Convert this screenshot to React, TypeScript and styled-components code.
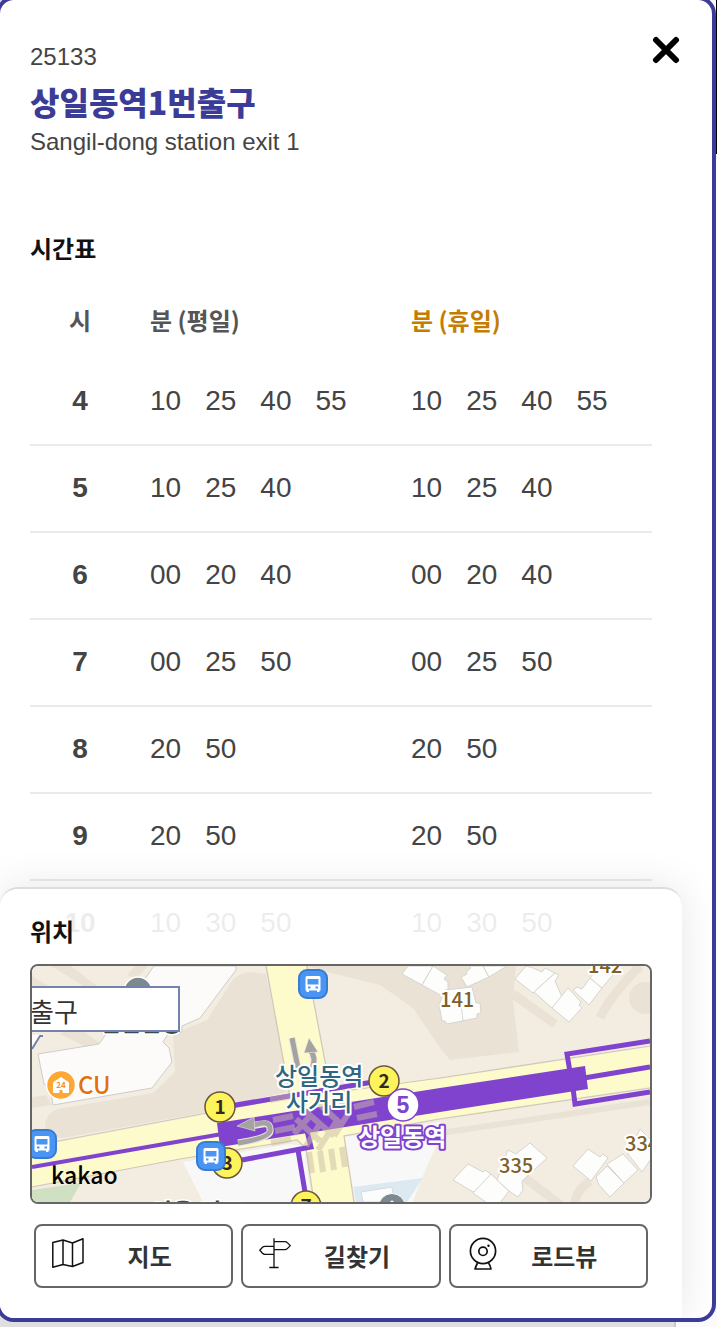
import React from 'react';
import styled, { createGlobalStyle } from 'styled-components';

const GlobalStyle = createGlobalStyle`
  * { box-sizing: border-box; }
  body {
    margin: 0;
    font-family: 'Liberation Sans', 'Noto Sans CJK KR', sans-serif;
    color: #444;
  }
`;

const Page = styled.div`
  min-height: 100vh;
  overflow: hidden;
  background:
    linear-gradient(#000, #000) top right / 1px 154px no-repeat,
    linear-gradient(90deg, #dfdfdf calc(100% - 43px), #c8c8c8 calc(100% - 43px), #c8c8c8 calc(100% - 41px), #fafafa calc(100% - 41px));
`;

const Panel = styled.main`
  margin: -4px 1px 5px -4px;
  border: 4px solid #3b3b98;
  border-radius: 18px;
  background: #fff;
  overflow: hidden;
`;

const Header = styled.header`
  display: flex;
  justify-content: space-between;
  align-items: flex-start;
  padding: 30px 26px 0 30px;
`;

const StopInfo = styled.div`
  padding-top: 13px;
  font-size: 24px;
  line-height: 28px;
`;

const StopName = styled.h1`
  margin: 6px 0 3px;
  font: 900 32px/48px 'Noto Sans CJK KR', sans-serif;
  color: #3b3b98;
`;

const Line = styled.p`
  margin: 0;
`;

const CloseButton = styled.button`
  display: grid;
  place-items: center;
  width: 40px;
  height: 40px;
  padding: 0;
  border: 0;
  background: none;
  cursor: pointer;
`;

const SectionTitle = styled.h2`
  margin: 0;
  font: 700 24px/36px 'Noto Sans CJK KR', sans-serif;
  color: #111;
`;

const Schedule = styled.section`
  padding: 74px 60px 0 30px;
`;

const Timetable = styled.table`
  width: 100%;
  margin-top: 18px;
  border-collapse: separate;
  border-spacing: 0;
  table-layout: fixed;
`;

const HeadCell = styled.th<{ $hour?: boolean; $holiday?: boolean }>`
  width: ${p => (p.$hour ? '100px' : 'auto')};
  height: 75px;
  padding: ${p => (p.$hour ? '0 0 3px' : '0 0 3px 20px')};
  text-align: ${p => (p.$hour ? 'center' : 'left')};
  font: 700 24px/36px 'Noto Sans CJK KR', sans-serif;
  color: ${p => (p.$holiday ? '#c47d00' : '#555')};
`;

const HourCell = styled.th`
  height: 87px;
  padding: 0 0 2px;
  border-bottom: 2px solid #ebebeb;
  font-size: 28px;
  line-height: 32px;
`;

const MinuteCell = styled.td`
  padding: 0 0 2px 20px;
  border-bottom: 2px solid #ebebeb;
  font-size: 28px;
  line-height: 32px;
`;

const Minutes = styled.div`
  display: flex;
  gap: 24px;
`;

const LocationSheet = styled.section`
  position: relative;
  margin: -81px 30px 0 0;
  padding: 24px 30px 26px;
  border-top: 2px solid #ddd;
  border-radius: 18px 18px 0 0;
  background: rgba(255, 255, 255, 0.9);
  box-shadow: 0 0 40px rgba(0, 0, 0, 0.1);
`;

const MapFrame = styled.div`
  position: relative;
  height: 240px;
  margin: 15px 0 16px;
  border: 2px solid #666;
  border-radius: 8px;
  overflow: hidden;
`;

const MapDrawing = styled.svg`
  display: block;
  width: 100%;
  height: 236px;
  font-family: 'Noto Sans CJK KR', sans-serif;
`;

const InfoWindow = styled.div`
  position: absolute;
  top: 20px;
  left: -8px;
  width: 156px;
  height: 46px;
  padding-left: 4px;
  border: 2px solid #7582ab;
  background: #fff;
  font: 400 26px/46px 'Noto Sans CJK KR', sans-serif;
  color: #333;
`;

const Actions = styled.div`
  display: flex;
`;

const ActionButton = styled.button`
  display: flex;
  flex: 1;
  align-items: center;
  height: 64px;
  margin: 4px;
  padding: 0 16px;
  border: 2px solid #666;
  border-radius: 8px;
  background: none;
  color: #333;
  font: 700 24px/36px 'Noto Sans CJK KR', sans-serif;
  cursor: pointer;

  svg {
    flex: none;
    margin-bottom: 6px;
    overflow: visible;
  }
`;

const ActionLabel = styled.span`
  flex: 1;
  text-align: center;
`;

type Row = { hour: string; weekday: string[]; holiday: string[] };

const same = (hour: string, minutes: string[]): Row => ({ hour, weekday: minutes, holiday: minutes });

const rows: Row[] = [
  same('4', ['10', '25', '40', '55']),
  same('5', ['10', '25', '40']),
  same('6', ['00', '20', '40']),
  same('7', ['00', '25', '50']),
  same('8', ['20', '50']),
  same('9', ['20', '50']),
  same('10', ['10', '30', '50']),
];

const MinuteList = ({ values }: { values: string[] }) => (
  <MinuteCell>
    <Minutes>
      {values.map(v => (
        <span key={v}>{v}</span>
      ))}
    </Minutes>
  </MinuteCell>
);

const BusStop = ({ x, y }: { x: number; y: number }) => (
  <g transform={`translate(${x} ${y})`}>
    <rect x="1" y="1" width="28" height="28" rx="8" fill="#4a95f3" stroke="#357dd2" strokeWidth="2" />
    <path
      fill="#fff"
      fillRule="evenodd"
      d="M9 7h12q1.500 0 1.500 1.500V21.500H21.500V23h-2.500v-1.500h-8V23H8.500v-1.500H7.500V8.500Q7.500 7 9 7zM9.500 10v5.500h11V10zM10 17.500v2h2.500v-2zM17.500 17.500v2H20v-2z"
    />
  </g>
);

const Exit = ({ x, y, label }: { x: number; y: number; label: string }) => (
  <g>
    <circle cx={x} cy={y} r="15" fill="#fdf35b" stroke="#6b5540" strokeWidth="1.500" />
    <text x={x} y={y + 7} textAnchor="middle" fontSize="19" fontWeight="700" fill="#33291e">
      {label}
    </text>
  </g>
);

const HouseNumber = ({ x, y, children }: { x: number; y: number; children: string }) => (
  <text x={x} y={y} fontSize="20" fontWeight="500" fill="#7e6028" stroke="#fff" strokeWidth="4" strokeLinejoin="round" paintOrder="stroke">
    {children}
  </text>
);

const buildings = [
  '376,0 370,8 390,19 401,0',
  '390,19 410,30 416,24 416,16 412,13 415,9 401,0',
  '437,0 439,2 434,6 435,8 429,11 435,21 457,11 451,0',
  '457,11 475,0 451,0',
  '413,24 440,21 444,37 448,37 449,47 445,48 445,52 415,58 413,55 410,55 407,39',
  '494,0 483,13 501,27 523,7 513,2 510,6 501,2',
  '523,7 527,9 523,15 530,31 520,42 502,26',
  '536,22 520,42 537,56 550,42 547,39 549,36',
  '541,24 545,21 550,23 558,12 570,22 557,39',
  '558,12 570,22 584,5 568,-1',
  '436,198 421,214 441,226 445,225 459,208 453,204 451,206',
  '459,208 477,225 468,237 455,237 441,227',
  '465,214 476,184 484,188 498,177 515,192 490,215 491,224 486,231 477,225',
  '556,183 541,200 559,215 576,192 571,188 568,191',
  '575,200 564,211 567,219 578,231 592,217',
  '575,198 591,188 606,204 592,217',
  '596,188 608,163 621,176 621,190 610,206',
];

const AreaMap = () => (
  <MapDrawing viewBox="0 0 618 236" preserveAspectRatio="xMinYMid slice" role="img" aria-label="상일동역 주변 지도">
    <rect width="618" height="236" fill="#f3ece1" />
    <g fill="#eae2d5">
      <path d="M141 69L158 61 175 54 198 18Q203 8 218 6L234 8 258 125 200 139 175 146 31 172Q12 170 13 158 15 147 25 143L121 127 143 106z" />
      <path d="M276 0L295 6 348 19 381 42 408 82 418 94 487 86 481 34 484 0z" />
      <path d="M19 0H39L75 28 55 22zM0 10L30 28H0zM103 0H116L104 13 95 9zM28 68L44 60 72 80 64 86zM0 131L14 129 20 139 0 142z" />
      <path d="M171 213l10-8 5 7-8 7z" />
      <circle cx="613" cy="32" r="16" />
    </g>
    <g fill="none" stroke="#eae2d5" strokeWidth="9">
      <path d="M481 28L523 58M568 52Q578 30 608 0M493 212L530 240M543 238Q543 225 558 215" />
      <path d="M408 167L618 136" strokeWidth="6" />
    </g>
    <path d="M0 224L49 217 38 236H0z" fill="#cfe0c3" />

    <path d="M151 196L258 178 272 180 280 236H171z" fill="#f8f8f9" />
    <path d="M313 171L408 156 413 160 390 212 381 236H323z" fill="#f8f8f9" />
    <path d="M321 221L391 212 375 236H324z" fill="#dce9f1" />
    <path d="M329 226L360 221 362 236H331z" fill="#fcfcfc" stroke="#d4dce0" />
    <path
      d="M122 0L67 78 6 88 12 118 18 121 21 139 120 122 140 96 137 82 131 76 136 68 150 66 150 60 168 52 204 4V0z"
      fill="#fcfbf9"
      stroke="#cdcdca"
    />
    <g fill="#fdfdfc" stroke="#d6d4d0">
      {buildings.map(p => (
        <polygon key={p} points={p} />
      ))}
      <path d="M429 37l2 18" />
    </g>

    <path
      d="M235 0H274L298 122 408 113 618 81V121L408 152 312 169 322 236H282L274 182 265 174 148 193 0 220V181L175 148 259 131z"
      fill="#fdfacb"
    />
    <g fill="none" stroke="#d0c8b5" strokeWidth="1.200">
      <path d="M234 0L258 131M275 0L298 122" />
      <path d="M0 180L175 147 259 131M298 127L408 112 618 80M0 221L148 193 265 174 274 182 282 236M322 236L312 170 408 153 618 122" />
    </g>

    <g fill="none" stroke="#8043ce" strokeWidth="5">
      <path d="M0 201L190 168" strokeWidth="4" />
      <path d="M552 112L618 101M198 140L341 116M210 194L279 181 275 165M266 184L273 226" />
      <path d="M618 75L535 88 538 106M541 122L543 138 618 126" />
    </g>
    <path d="M185 157L408 122 553 100 556 123 408 146 188 181z" fill="#8043ce" />

    <g fill="none" stroke="#c9bba5" strokeOpacity=".5" strokeWidth="6">
      <path d="M241 154l20-4M243 165l20-4M322 141l20-5M325 152l20-4M238 134l22-4M239 177l20-4" />
      <path d="M272 144l30 26M264 153l24 22M284 135l26 24M274 180l15-24M286 184l18-28M302 170l14-22M262 168l16-18" />
      <path d="M277 186l3 21M288 185l3 21M299 183l3 21M310 181l3 20" />
    </g>

    <g fill="none" stroke="#e9e6de" strokeWidth="7">
      <path d="M260 72L266 102M279 88Q284 92 280 104" />
      <path d="M218 160L230 158Q239 156 238 166 237 172 206 177" />
    </g>
    <g fill="none" stroke="#a5a3a2" strokeWidth="5">
      <path d="M260 72L266 102M278 84Q285 92 280 102" />
      <path d="M218 160L230 157Q239 156 238 165 237 172 206 177" />
    </g>
    <path d="M277 72L286 86 272 87zM205 160L222 151 223 165z" fill="#a5a3a2" stroke="#e9e6de" strokeWidth=".6" />

    <text x="68" y="65" fontSize="22" fontWeight="700" fill="#3c4a54" stroke="#fff" strokeWidth="3" paintOrder="stroke">선일빌딩</text>
    <circle cx="106" cy="25" r="14" fill="#7c8a90" stroke="#fff" strokeWidth="1.500" />
    <circle cx="360" cy="241" r="13.500" fill="#7c8a90" stroke="#fff" strokeWidth="1" />
    <path d="M358 236q2-3 4 0z" fill="#fff" />
    <path d="M10 69L0 84V69z" fill="#fff" />
    <path d="M11 70H8L0 83" fill="none" stroke="#7582ab" strokeWidth="2" />

    <circle cx="29" cy="119" r="14.500" fill="#fda835" stroke="#fff" strokeWidth="1.500" />
    <path d="M29 111.500L36.500 116.500V126.500H31V123.500H27V126.500H21.500V116.500z" fill="#fff" stroke="#fff" strokeLinejoin="round" />
    <text x="29" y="122" textAnchor="middle" fontSize="8" fontWeight="700" fill="#f09020">24</text>
    <text x="46" y="128" fontSize="24" fontWeight="500" fill="#e2700f" stroke="#fff" strokeWidth="3" paintOrder="stroke">CU</text>

    <HouseNumber x={408} y={41}>141</HouseNumber>
    <HouseNumber x={556} y={7}>142</HouseNumber>
    <HouseNumber x={467} y={207}>335</HouseNumber>
    <HouseNumber x={593} y={185}>334</HouseNumber>

    <g fontSize="24" fontWeight="500" fill="#2f6680" stroke="#fff" strokeWidth="4" strokeLinejoin="round" paintOrder="stroke">
      <text x="243" y="119">상일동역</text>
      <text x="254" y="145">사거리</text>
    </g>

    <Exit x={188} y={141} label="1" />
    <Exit x={352} y={115} label="2" />
    <Exit x={195} y={197} label="3" />
    <Exit x={274} y={240} label="7" />
    <circle cx="371" cy="139" r="16" fill="#fff" stroke="#8043ce" strokeWidth="1.500" />
    <text x="371" y="147" textAnchor="middle" fontSize="23" fontWeight="700" fill="#8043ce" fontFamily="Liberation Sans, sans-serif">5</text>
    <text x="326" y="180" fontSize="24" fontWeight="700" fill="#fff" stroke="#8043ce" strokeWidth="4" strokeLinejoin="round" paintOrder="stroke">
      상일동역
    </text>

    <BusStop x={266} y={3} />
    <BusStop x={-5} y={163} />
    <BusStop x={164} y={175} />

    <text x="118" y="255" fontSize="24" fontWeight="700" fill="#3c4a54" stroke="#fff" strokeWidth="3" paintOrder="stroke">서울 리모</text>
    <text x="19" y="218" fontSize="23" fontWeight="500" fill="#000">kakao</text>
  </MapDrawing>
);

const CloseIcon = () => (
  <svg width="28" height="28" viewBox="0 0 28 28" fill="none" stroke="#000" strokeWidth="6" strokeLinecap="round" aria-hidden="true">
    <path d="M4 4l20 20M24 4L4 24" />
  </svg>
);

const MapIcon = () => (
  <svg width="32" height="32" viewBox="0 0 32 32" fill="none" stroke="#111" strokeWidth="1.500" strokeLinejoin="round" aria-hidden="true">
    <path d="M.8 5.500L11 3 20.500 6 31 1.800V25.500L20.500 29.500 11 27.500.8 30.300zM11 3V27.500M20.500 6V29.500" />
  </svg>
);

const SignpostIcon = () => (
  <svg width="32" height="32" viewBox="0 0 32 32" fill="none" stroke="#111" strokeWidth="1.300" strokeLinejoin="round" aria-hidden="true">
    <path d="M15 1.300V30.500M10.300 30.500H19.600M15 4.600H26Q27.300 4.600 28.300 5.600L31.300 8.600 28.300 11.600Q27.300 12.600 26 12.600H15M15 9.300H6Q4.500 9.300 3.500 10.300L.8 13.300 3.500 16.300Q4.500 17.300 6 17.300H15" />
  </svg>
);

const RoadviewIcon = () => (
  <svg width="32" height="32" viewBox="0 0 32 32" fill="none" stroke="#111" strokeWidth="1.700" aria-hidden="true">
    <circle cx="16" cy="14" r="12.600" />
    <circle cx="16" cy="14.300" r="4.200" />
    <circle cx="21.500" cy="8.800" r="1.200" fill="#111" stroke="none" />
    <path d="M10.500 26Q9 29 8 32H24Q23.500 28.500 21.500 26" strokeLinejoin="round" />
  </svg>
);

export default function App() {
  return (
    <>
      <GlobalStyle />
      <Page>
        <Panel>
          <Header>
            <StopInfo>
              <Line>25133</Line>
              <StopName>상일동역1번출구</StopName>
              <Line>Sangil-dong station exit 1</Line>
            </StopInfo>
            <CloseButton type="button" aria-label="닫기">
              <CloseIcon />
            </CloseButton>
          </Header>

          <Schedule>
            <SectionTitle>시간표</SectionTitle>
            <Timetable>
              <thead>
                <tr>
                  <HeadCell $hour scope="col">시</HeadCell>
                  <HeadCell scope="col">분 (평일)</HeadCell>
                  <HeadCell $holiday scope="col">분 (휴일)</HeadCell>
                </tr>
              </thead>
              <tbody>
                {rows.map(row => (
                  <tr key={row.hour}>
                    <HourCell scope="row">{row.hour}</HourCell>
                    <MinuteList values={row.weekday} />
                    <MinuteList values={row.holiday} />
                  </tr>
                ))}
              </tbody>
            </Timetable>
          </Schedule>

          <LocationSheet>
            <SectionTitle>위치</SectionTitle>
            <MapFrame>
              <AreaMap />
              <InfoWindow>출구</InfoWindow>
            </MapFrame>
            <Actions>
              <ActionButton type="button">
                <MapIcon />
                <ActionLabel>지도</ActionLabel>
              </ActionButton>
              <ActionButton type="button">
                <SignpostIcon />
                <ActionLabel>길찾기</ActionLabel>
              </ActionButton>
              <ActionButton type="button">
                <RoadviewIcon />
                <ActionLabel>로드뷰</ActionLabel>
              </ActionButton>
            </Actions>
          </LocationSheet>
        </Panel>
      </Page>
    </>
  );
}
